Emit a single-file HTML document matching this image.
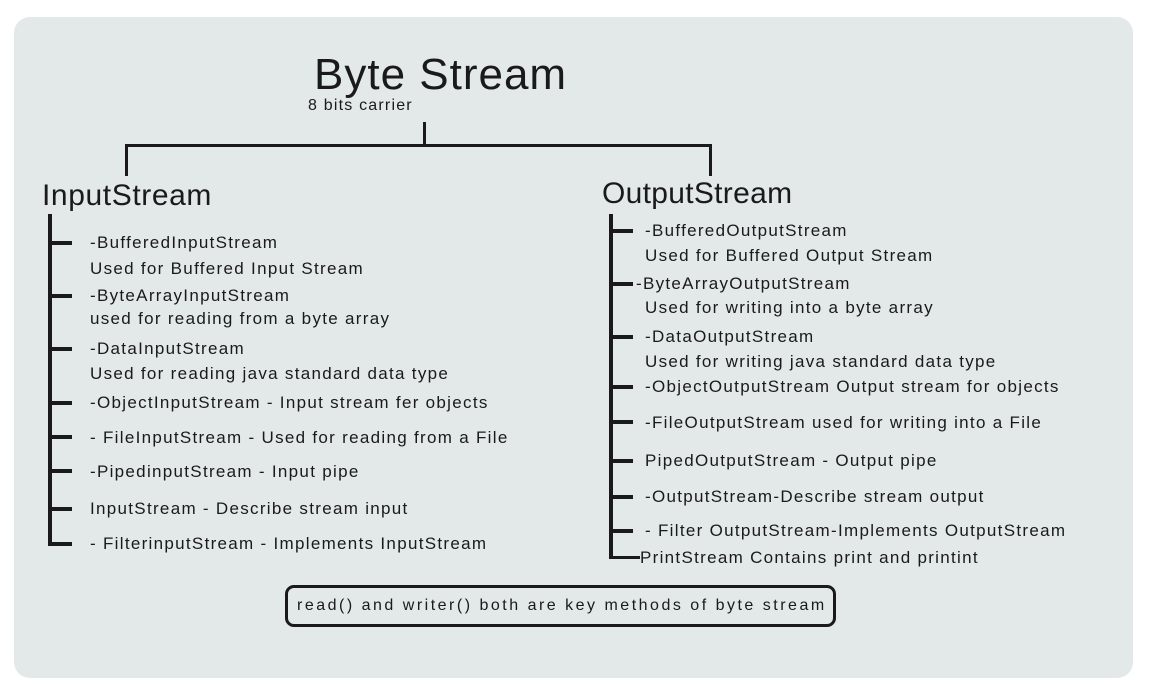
<!DOCTYPE html>
<html><head><meta charset="utf-8"><style>
body{margin:0;width:1156px;height:692px;background:#fff;position:relative;overflow:hidden;font-family:"Liberation Sans",sans-serif;color:#1a1a1a}
.panel{position:absolute;left:14px;top:17px;width:1119px;height:661px;background:#e3e8e8;border-radius:16px}
.t{position:absolute;white-space:nowrap;font-size:17px;line-height:20px;letter-spacing:1.3px}
.l{position:absolute;background:#1a1a1a}
</style></head><body>
<div class="panel"></div>
<div class="t" style="left:314px;top:50px;font-size:44px;line-height:50px;letter-spacing:1px">Byte Stream</div>
<div class="t" style="left:308px;top:96px;font-size:16px;letter-spacing:1.2px">8 bits carrier</div>
<div class="l" style="left:423px;top:122px;width:3px;height:24px"></div>
<div class="l" style="left:125px;top:144px;width:587px;height:3px"></div>
<div class="l" style="left:125px;top:144px;width:3px;height:32px"></div>
<div class="l" style="left:709px;top:144px;width:3px;height:32px"></div>
<div class="t" style="left:42px;top:178px;font-size:30px;line-height:36px;letter-spacing:0.6px">InputStream</div>
<div class="t" style="left:602px;top:176px;font-size:30px;line-height:36px;letter-spacing:0.3px">OutputStream</div>
<div class="l" style="left:48px;top:214px;width:4px;height:332px"></div>
<div class="l" style="left:48px;top:241px;width:24px;height:4px"></div>
<div class="l" style="left:48px;top:294px;width:24px;height:4px"></div>
<div class="l" style="left:48px;top:347px;width:24px;height:4px"></div>
<div class="l" style="left:48px;top:401px;width:24px;height:4px"></div>
<div class="l" style="left:48px;top:435px;width:24px;height:4px"></div>
<div class="l" style="left:48px;top:469px;width:24px;height:4px"></div>
<div class="l" style="left:48px;top:507px;width:24px;height:4px"></div>
<div class="l" style="left:48px;top:542px;width:24px;height:4px"></div>
<div class="t" style="left:90px;top:233px">-BufferedInputStream</div>
<div class="t" style="left:90px;top:259px">Used for Buffered Input Stream</div>
<div class="t" style="left:90px;top:286px">-ByteArrayInputStream</div>
<div class="t" style="left:90px;top:309px">used for reading from a byte array</div>
<div class="t" style="left:90px;top:339px">-DataInputStream</div>
<div class="t" style="left:90px;top:364px">Used for reading java standard data type</div>
<div class="t" style="left:90px;top:393px">-ObjectInputStream - Input stream fer objects</div>
<div class="t" style="left:90px;top:428px">- FileInputStream - Used for reading from a File</div>
<div class="t" style="left:90px;top:462px">-PipedinputStream - Input pipe</div>
<div class="t" style="left:90px;top:499px">InputStream - Describe stream input</div>
<div class="t" style="left:90px;top:534px">- FilterinputStream - Implements InputStream</div>
<div class="l" style="left:609px;top:214px;width:4px;height:345px"></div>
<div class="l" style="left:609px;top:229px;width:24px;height:4px"></div>
<div class="l" style="left:609px;top:282px;width:24px;height:4px"></div>
<div class="l" style="left:609px;top:335px;width:24px;height:4px"></div>
<div class="l" style="left:609px;top:385px;width:24px;height:4px"></div>
<div class="l" style="left:609px;top:420px;width:24px;height:4px"></div>
<div class="l" style="left:609px;top:459px;width:24px;height:4px"></div>
<div class="l" style="left:609px;top:495px;width:24px;height:4px"></div>
<div class="l" style="left:609px;top:529px;width:24px;height:4px"></div>
<div class="l" style="left:609px;top:556px;width:31px;height:3px"></div>
<div class="t" style="left:645px;top:221px">-BufferedOutputStream</div>
<div class="t" style="left:645px;top:246px">Used for Buffered Output Stream</div>
<div class="t" style="left:636px;top:274px">-ByteArrayOutputStream</div>
<div class="t" style="left:645px;top:298px">Used for writing into a byte array</div>
<div class="t" style="left:645px;top:327px">-DataOutputStream</div>
<div class="t" style="left:645px;top:352px">Used for writing java standard data type</div>
<div class="t" style="left:645px;top:377px">-ObjectOutputStream Output stream for objects</div>
<div class="t" style="left:645px;top:413px">-FileOutputStream used for writing into a File</div>
<div class="t" style="left:645px;top:451px">PipedOutputStream - Output pipe</div>
<div class="t" style="left:645px;top:487px">-OutputStream-Describe stream output</div>
<div class="t" style="left:645px;top:521px">- Filter OutputStream-Implements OutputStream</div>
<div class="t" style="left:640px;top:548px">PrintStream Contains print and printint</div>
<div style="position:absolute;left:285px;top:585px;width:545px;height:36px;border:3px solid #1a1a1a;border-radius:9px"></div>
<div class="t" style="left:297px;top:596px;font-size:16px;letter-spacing:2.5px">read() and writer() both are key methods of byte stream</div>
</body></html>
